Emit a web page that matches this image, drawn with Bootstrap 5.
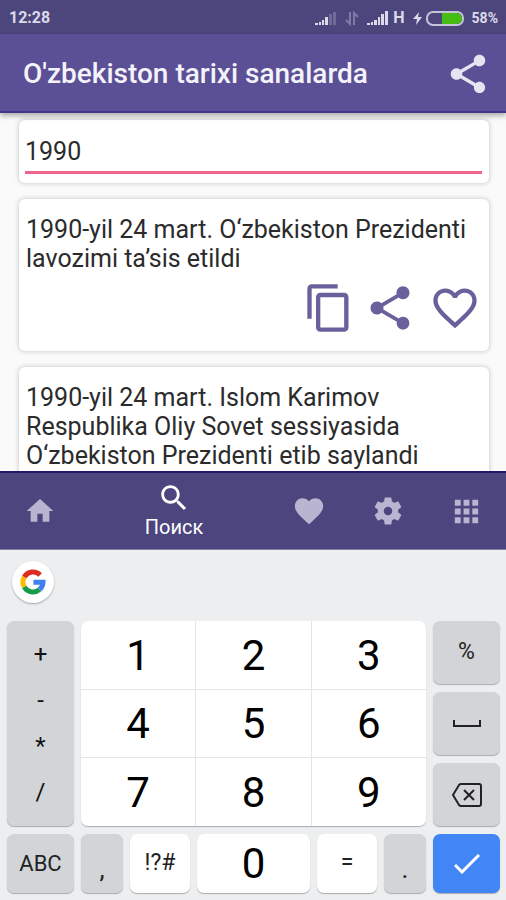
<!DOCTYPE html>
<html lang="uz">
<head>
<meta charset="utf-8">
<meta name="viewport" content="width=device-width, initial-scale=1">
<title>O'zbekiston tarixi sanalarda</title>
<link href="https://cdn.jsdelivr.net/npm/bootstrap@5.3.0/dist/css/bootstrap.min.css" rel="stylesheet">
<style>
  body { font-family: Roboto, "Liberation Sans", sans-serif; background: #fafafa; color: #2b2b2b; }
  button { font-family: inherit; }
  svg { display: block; flex: none; }
  .status-bar { background: #4d467d; color: #dcdaea; height: 34px; font-size: 16px; font-weight: 700; padding: 2px 8px 0 9px; }
  .status-bar .percent { font-size: 14px; }
  .app-bar { background: #5b5096; height: 79px; padding: 2px 15px 0 23px; border-bottom: 2px solid #43358a; box-shadow: 0 3px 5px rgba(0,0,0,.3); z-index: 1; }
  .app-bar h1 { font-size: 28px; line-height: 32px; font-weight: 500; color: #f4f3fa; }
  .app-bar .icon-btn { color: #e6e4f0; }
  .icon-btn { background: none; border: 0; padding: 0; color: inherit; }
  .results { min-height: 0; padding: 7px 17px 0 19px; gap: 16px; }
  .tile { background: #fff; border-radius: 6px; box-shadow: 0 0 4px 1px rgba(0,0,0,.16); flex: none; }
  .search-tile { padding: 12px 7px 9px 6px; }
  .search-tile input { width: 100%; border: 0; border-bottom: 3px solid #f0648c; outline: 0; background: none; font-size: 25px; line-height: 30px; padding: 5px 0 4px; color: #2b2b2b; border-radius: 0; }
  .fact { padding: 16px 7px 17px; }
  .fact p { font-size: 25px; line-height: 29px; margin-bottom: 9px; }
  .fact-actions { color: #6a609c; gap: 13px; padding-right: 1px; }
  .tab-bar { background: #4d457e; height: 79px; border-top: 2px solid #22156a; border-bottom: 1px solid #8780a5; z-index: 1; }
  .tab-bar a { flex: 79 1 0; color: #b9b5d0; text-decoration: none; }
  .tab-bar a.current { flex-grow: 190; color: #fff; font-size: 20px; line-height: 24px; padding-bottom: 2px; }
  .keyboard { background: #eceeef; padding: 11px 6px 7px 7px; color: #111; }
  .google-btn { width: 42px; height: 42px; margin: 0 0 18px 5px; background: #fff; box-shadow: 0 1px 2px rgba(0,0,0,.3); }
  .keys { display: grid; grid-template-columns: 67px 1fr 67px; grid-template-rows: 205px 59px; gap: 8px 7px; }
  .key { border: 0; padding: 0; background: #fff; border-radius: 7px; box-shadow: 0 1px 1px #a9abad; color: #222; font-size: 23px; display: flex; align-items: center; justify-content: center; }
  .key-gray { background: #d3d4d8; }
  .key-blue { background: #4285f4; color: #fff; }
  .ops { background: #d3d4d8; border-radius: 7px; box-shadow: 0 1px 1px #a9abad; padding: 10px 0; }
  .ops button { background: none; border: 0; padding: 0; color: #111; font-size: 24px; line-height: 46px; }
  .digits { display: grid; grid-template: repeat(3, 1fr) / repeat(3, 1fr); gap: 1px; background: #e4e5e6; border-radius: 7px; overflow: hidden; box-shadow: 0 1px 1px #a9abad; }
  .digits button { background: #fff; border: 0; padding: 2px 0 0; }
  .digits button, .key-zero { font-size: 42px; line-height: 48px; color: #000; }
  .side { display: grid; grid-template-rows: repeat(3, 1fr); gap: 8px; }
  .bottom-mid { display: grid; grid-template-columns: 42px 60px 1fr 60px 42px; gap: 7px; }
  .key-low { padding-top: 12px; font-size: 26px; }
  .key-abc { font-size: 22px; }
</style>
<script src="https://cdn.jsdelivr.net/npm/bootstrap@5.3.0/dist/js/bootstrap.bundle.min.js"></script>
</head>
<body>
<svg width="0" height="0" class="position-absolute" aria-hidden="true">
  <symbol id="share" viewBox="0 0 24 24"><path fill="currentColor" d="M18 16.08c-.76 0-1.44.3-1.96.77L8.91 12.7c.05-.23.09-.46.09-.7s-.04-.47-.09-.7l7.05-4.11c.54.5 1.25.81 2.04.81 1.66 0 3-1.34 3-3s-1.34-3-3-3-3 1.34-3 3c0 .24.04.47.09.7L8.04 9.81C7.5 9.31 6.79 9 6 9c-1.66 0-3 1.34-3 3s1.34 3 3 3c.79 0 1.5-.31 2.04-.81l7.12 4.16c-.05.21-.08.43-.08.65 0 1.61 1.31 2.92 2.92 2.92s2.92-1.31 2.92-2.92-1.31-2.92-2.92-2.92z"/></symbol>
  <symbol id="copy" viewBox="2 0 20 24"><path fill="currentColor" d="M16 1H4c-1.1 0-2 .9-2 2v14h2V3h12V1zm3 4H8c-1.1 0-2 .9-2 2v14c0 1.1.9 2 2 2h11c1.1 0 2-.9 2-2V7c0-1.1-.9-2-2-2zm0 16H8V7h11v14z"/></symbol>
  <symbol id="heart-line" viewBox="0 0 24 24"><path fill="currentColor" d="M16.5 3c-1.74 0-3.41.81-4.5 2.09C10.91 3.81 9.24 3 7.5 3 4.42 3 2 5.42 2 8.5c0 3.78 3.4 6.86 8.55 11.54L12 21.35l1.45-1.32C18.6 15.36 22 12.28 22 8.5 22 5.42 19.58 3 16.5 3zm-4.4 15.55l-.1.1-.1-.1C7.14 14.24 4 11.39 4 8.5 4 6.5 5.5 5 7.5 5c1.54 0 3.04.99 3.57 2.36h1.87C13.46 5.99 14.96 5 16.5 5c2 0 3.5 1.5 3.5 3.5 0 2.89-3.14 5.74-7.9 10.05z"/></symbol>
</svg>
<div class="vh-100 d-flex flex-column overflow-hidden">
  <div class="status-bar d-flex align-items-center justify-content-between flex-shrink-0">
    <span>12:28</span>
    <div class="d-flex align-items-center">
      <svg width="22" height="15" viewBox="0 0 22 15" aria-hidden="true"><g fill="currentColor"><path d="M0 12h3v2H0zM4 11h2v3H4zM7 9h2v5H7zM10 6h3v8h-3z"/><path opacity=".25" d="M14 3h3v11h-3zM18 1h3v13h-3z"/></g></svg>
      <svg class="ms-2" width="14" height="15" viewBox="0 0 14 15" fill="none" stroke="currentColor" stroke-width="2" opacity=".35" aria-hidden="true"><path d="M5 1v12L1 9M9 14V2l4 4"/></svg>
      <svg class="ms-2" width="22" height="15" viewBox="0 0 22 15" fill="currentColor" aria-hidden="true"><path d="M0 12h3v2H0zM4 11h2v3H4zM7 9h3v5H7zM11 6h2v8h-2zM14 3h3v11h-3zM18 0h3v14h-3z"/></svg>
      <span class="ms-1">H</span>
      <svg class="ms-2" width="9" height="13" viewBox="0 0 9 13" fill="currentColor" aria-hidden="true"><path d="M6 0 0 7h4l-1 6 6-8H5z"/></svg>
      <svg class="ms-1" width="38" height="15" viewBox="0 0 38 15" aria-hidden="true"><rect x="1" y="1" width="36" height="13" rx="6" fill="none" stroke="currentColor" stroke-width="2" opacity=".85"/><path d="M16 2h15q5 1 5 5.500T31 13H16z" fill="#46bd12"/></svg>
      <span class="percent ms-2">58%</span>
    </div>
  </div>
  <header class="app-bar d-flex align-items-center justify-content-between flex-shrink-0 position-relative">
    <h1 class="m-0">O'zbekiston tarixi sanalarda</h1>
    <button class="icon-btn" type="button" aria-label="Ulashish"><svg width="46" height="46"><use href="#share"/></svg></button>
  </header>
  <main class="results d-flex flex-column flex-grow-1 overflow-hidden">
    <div class="tile search-tile"><input type="text" value="1990" aria-label="Qidirish"></div>
    <article class="tile fact">
      <p>1990-yil 24 mart. O‘zbekiston Prezidenti lavozimi ta’sis etildi</p>
      <div class="fact-actions d-flex justify-content-end">
        <button class="icon-btn" type="button" aria-label="Nusxa olish"><svg width="44" height="52"><use href="#copy"/></svg></button>
        <button class="icon-btn" type="button" aria-label="Ulashish"><svg width="52" height="52"><use href="#share"/></svg></button>
        <button class="icon-btn" type="button" aria-label="Sevimli"><svg width="52" height="52"><use href="#heart-line"/></svg></button>
      </div>
    </article>
    <article class="tile fact">
      <p>1990-yil 24 mart. Islom Karimov Respublika Oliy Sovet sessiyasida O‘zbekiston Prezidenti etib saylandi</p>
    </article>
  </main>
  <nav class="tab-bar d-flex flex-shrink-0">
    <a href="#home" class="d-flex align-items-center justify-content-center" aria-label="Home"><svg width="32" height="32" viewBox="0 0 24 24"><path fill="currentColor" d="M10 20v-6h4v6h5v-8h3L12 3 2 12h3v8z"/></svg></a>
    <a href="#search" class="current d-flex flex-column align-items-center justify-content-center"><svg width="34" height="34" viewBox="0 0 24 24"><path fill="currentColor" d="M15.500 14h-.79l-.28-.27C15.410 12.590 16 11.110 16 9.500 16 5.910 13.090 3 9.500 3S3 5.910 3 9.500 5.910 16 9.500 16c1.610 0 3.090-.59 4.230-1.570l.27.28v.79l5 4.990L20.490 19l-4.990-5zm-6 0C7.010 14 5 11.990 5 9.500S7.010 5 9.500 5 14 7.010 14 9.500 11.990 14 9.500 14z"/></svg><span>Поиск</span></a>
    <a href="#saved" class="d-flex align-items-center justify-content-center" aria-label="Saved"><svg width="34" height="34" viewBox="0 0 24 24"><path fill="currentColor" d="M12 21.350l-1.450-1.320C5.400 15.360 2 12.280 2 8.500 2 5.420 4.420 3 7.500 3c1.740 0 3.410.81 4.500 2.090C13.090 3.810 14.760 3 16.500 3 19.580 3 22 5.420 22 8.500c0 3.780-3.400 6.860-8.550 11.540L12 21.350z"/></svg></a>
    <a href="#settings" class="d-flex align-items-center justify-content-center" aria-label="Settings"><svg width="34" height="34" viewBox="0 0 24 24"><path fill="currentColor" d="M19.140 12.940c.04-.3.06-.61.06-.94 0-.32-.02-.64-.07-.94l2.030-1.580c.18-.14.23-.41.12-.61l-1.920-3.320c-.12-.22-.37-.29-.59-.22l-2.390.96c-.5-.38-1.030-.7-1.620-.94l-.36-2.540c-.04-.24-.24-.41-.48-.41h-3.840c-.24 0-.43.17-.47.41l-.36 2.540c-.59.24-1.130.57-1.620.94l-2.390-.96c-.22-.08-.47 0-.59.22L2.740 8.870c-.12.21-.08.47.12.61l2.030 1.580c-.05.3-.09.63-.09.94s.02.64.07.94l-2.030 1.580c-.18.14-.23.41-.12.61l1.920 3.320c.12.22.37.29.59.22l2.390-.96c.5.38 1.030.7 1.620.94l.36 2.540c.05.24.24.41.48.41h3.840c.24 0 .44-.17.47-.41l.36-2.540c.59-.24 1.130-.56 1.620-.94l2.390.96c.22.08.47 0 .59-.22l1.920-3.320c.12-.22.07-.47-.12-.61l-2.010-1.580zM12 15c-1.650 0-3-1.350-3-3s1.350-3 3-3 3 1.350 3 3-1.350 3-3 3z"/></svg></a>
    <a href="#more" class="d-flex align-items-center justify-content-center" aria-label="More"><svg width="35" height="35" viewBox="0 0 24 24"><path fill="currentColor" d="M4 8h4V4H4v4zm6 12h4v-4h-4v4zm-6 0h4v-4H4v4zm0-6h4v-4H4v4zm6 0h4v-4h-4v4zm6-10v4h4V4h-4zm-6 4h4V4h-4v4zm6 6h4v-4h-4v4zm0 6h4v-4h-4v4z"/></svg></a>
  </nav>
  <section class="keyboard flex-shrink-0" aria-label="Keyboard">
    <button class="google-btn border-0 p-0 rounded-circle d-flex align-items-center justify-content-center" type="button" aria-label="Google">
      <svg width="26" height="26" viewBox="0 0 26 26" fill="none" stroke-width="5"><path stroke="#FBBC05" d="M4.300 8A10 10 0 0 0 4.300 18"/><path stroke="#dd2c20" d="M20.100 5.900A10 10 0 0 0 4.300 8"/><path stroke="#169c4a" d="M4.300 18A10 10 0 0 0 19.400 20.700"/><path stroke="#3f7fee" d="M19.400 20.700A10 10 0 0 0 23 13.200H13.500"/></svg>
    </button>
    <div class="keys">
      <div class="ops d-flex flex-column">
        <button type="button">+</button><button type="button">-</button><button type="button">*</button><button type="button">/</button>
      </div>
      <div class="digits">
        <button type="button">1</button><button type="button">2</button><button type="button">3</button>
        <button type="button">4</button><button type="button">5</button><button type="button">6</button>
        <button type="button">7</button><button type="button">8</button><button type="button">9</button>
      </div>
      <div class="side">
        <button class="key key-gray" type="button">%</button>
        <button class="key key-gray" type="button" aria-label="Space"><svg width="28" height="8" viewBox="0 0 28 8" fill="none" stroke="currentColor" stroke-width="2"><path d="M1 0v6h26V0"/></svg></button>
        <button class="key key-gray" type="button" aria-label="Backspace"><svg width="32" height="26" viewBox="0 0 32 26" fill="none" stroke="currentColor" stroke-width="2"><path d="M10 2h18q2 0 2 2v18q0 2-2 2H10q-1 0-2-1L2 13l6-10q1-1 2-1zM13 8l10 10M23 8 13 18"/></svg></button>
      </div>
      <button class="key key-gray key-abc" type="button">ABC</button>
      <div class="bottom-mid">
        <button class="key key-gray key-low" type="button">,</button>
        <button class="key" type="button">!?#</button>
        <button class="key key-zero" type="button">0</button>
        <button class="key" type="button">=</button>
        <button class="key key-gray key-low" type="button">.</button>
      </div>
      <button class="key key-blue" type="button" aria-label="Done"><svg width="26" height="20" viewBox="0 0 26 20" fill="none" stroke="currentColor" stroke-width="3"><path d="m1 11 7 7L25 1"/></svg></button>
    </div>
  </section>
</div>
</body>
</html>
